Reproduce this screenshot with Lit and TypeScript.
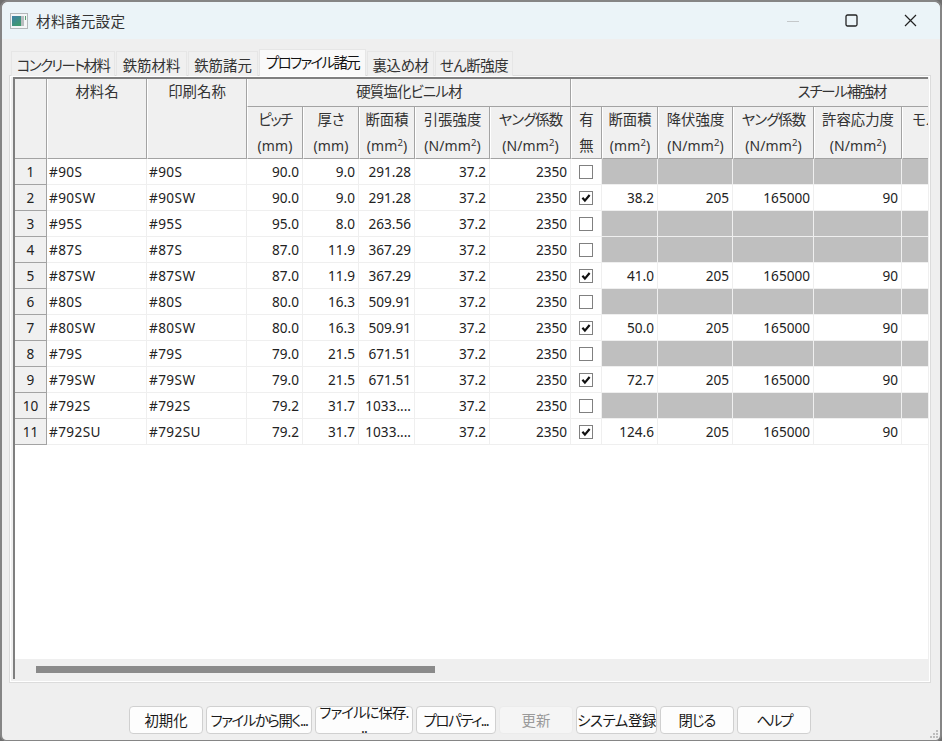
import { LitElement, html, svg, css } from "lit";
import { customElement } from "lit/decorators.js";

const sq = html`(mm<sup>2</sup>)`;
const nsq = html`(N/mm<sup>2</sup>)`;

const ROWS: [string, string, string, string, boolean, string?][] = [
  ["#90S", "90.0", "9.0", "291.28", false],
  ["#90SW", "90.0", "9.0", "291.28", true, "38.2"],
  ["#95S", "95.0", "8.0", "263.56", false],
  ["#87S", "87.0", "11.9", "367.29", false],
  ["#87SW", "87.0", "11.9", "367.29", true, "41.0"],
  ["#80S", "80.0", "16.3", "509.91", false],
  ["#80SW", "80.0", "16.3", "509.91", true, "50.0"],
  ["#79S", "79.0", "21.5", "671.51", false],
  ["#79SW", "79.0", "21.5", "671.51", true, "72.7"],
  ["#792S", "79.2", "31.7", "1033....", false],
  ["#792SU", "79.2", "31.7", "1033....", true, "124.6"],
];

@customElement("app-root")
export class AppRoot extends LitElement {
  static styles = css`
    :host {
      display: block;
      width: 942px;
      height: 741px;
      background: #6f6f6f;
      font-family: "Noto Sans", "Noto Sans CJK JP", sans-serif;
      font-size: 14.4px;
      color: #222;
      font-feature-settings: "palt";
    }
    .win {
      box-sizing: border-box;
      height: 741px;
      border: solid #858585;
      border-width: 2px 2px 1px 2px;
      border-radius: 8px 8px 6px 6px;
      background: #efefef;
      display: flex;
      flex-direction: column;
      overflow: hidden;
      position: relative;
    }
    .title {
      height: 37px;
      flex: none;
      background: #ebf4f8;
      display: flex;
      align-items: center;
      padding-left: 8px;
    }
    .title .name { margin-left: 8px; color: #333; font-size: 14.6px; letter-spacing: 0.3px; }
    .spacer { flex: 1; }
    .ctl { width: 59px; display: flex; justify-content: center; align-items: center; }
    .ctl svg { display: block; }
    .tabs {
      display: flex;
      height: 27px;
      margin: 10px 0 -1px 9px;
      align-items: flex-end;
      gap: 1px;
      position: relative;
      z-index: 1;
    }
    .tab {
      box-sizing: border-box;
      height: 25px;
      background: #f0f0f0;
      border: 1px solid #e6e6e6;
      border-bottom: none;
      display: flex;
      align-items: center;
      justify-content: center;
      white-space: nowrap;
      color: #333;
    }
    .tab.sel { height: 27px; background: #f9f9f9; color: #111; padding-bottom: 4px; }
    .k1 { letter-spacing: -1.6px; }
    .k2 { letter-spacing: -0.4px; }
    .pane {
      margin: 0 9px 0 7px;
      box-sizing: border-box;
      height: 608px;
      flex: none;
      border: 1px solid #dcdcdc;
      padding: 1px 2px 3px 3px;
      background: #efefef;
      display: flex;
      flex-direction: column;
      box-shadow: inset 0 0 0 1px #fff;
    }
    .view {
      flex: 1;
      min-height: 0;
      border: solid #7f7f7f;
      border-width: 2px 0 0 2px;
      display: flex;
      flex-direction: column;
      overflow: hidden;
      background: #fff;
    }
    .scroll { flex: 1; min-height: 0; overflow: hidden; background: #fff; }
    .grid {
      display: grid;
      grid-template-columns: 32px 100px 100px 56px 56px 56px 75px 81px 31px 56px 75px 81px 88px 74px 137px;
      grid-template-rows: 28px 52px;
      grid-auto-rows: 26px;
      width: 1100px;
    }
    .h {
      box-sizing: border-box;
      background: #f0f0f0;
      border-right: 1px solid #a3a3a3;
      border-bottom: 1px solid #a3a3a3;
      border-left: 1px solid #fff;
      text-align: center;
      line-height: 26px;
      white-space: nowrap;
      overflow: hidden;
      color: #333;
    }
    .h.r2 { grid-row: span 2; }
    .h.c5 { grid-column: span 5; letter-spacing: -0.8px; }
    .h.c7 { grid-column: span 7; letter-spacing: -1.2px; }
    .h.corner { border-left: none; }
    .h .u { font-size: 14px; letter-spacing: 0.1px; }
    .kn { letter-spacing: -1.5px; }
    .kh { letter-spacing: -0.9px; }
    sup { font-size: 9.5px; line-height: 0; vertical-align: 5px; }
    .rh {
      box-sizing: border-box;
      background: #f0f0f0;
      border-right: 1px solid #a3a3a3;
      border-bottom: 1px solid #a3a3a3;
      text-align: center;
      line-height: 25px;
      font-size: 13.6px;
    }
    .c {
      box-sizing: border-box;
      border-right: 1px solid #efefef;
      border-bottom: 1px solid #efefef;
      background: #fff;
      line-height: 25px;
      font-size: 13.6px;
      padding: 0 3px 0 2px;
      white-space: nowrap;
      overflow: hidden;
    }
    .c.t { letter-spacing: 0.4px; }
    .c.n { text-align: right; }
    .c.g { background: #bfbfbf; }
    .c.k { display: flex; align-items: center; justify-content: center; padding: 0; }
    .box {
      box-sizing: border-box;
      width: 14px;
      height: 14px;
      border: 1px solid #808080;
      background: #fff;
      display: block;
    }
    .hbar { height: 20px; flex: none; background: #efefef; display: flex; align-items: center; }
    .thumb { width: 399px; height: 7px; margin-left: 21px; background: #8a8a8a; }
    .btns {
      display: flex;
      gap: 3px;
      margin: 23px 0 0 127px;
      height: 28px;
    }
    .b {
      box-sizing: border-box;
      height: 28px;
      padding: 1px 0 0;
      background: #fdfdfd;
      border: 1px solid #d0d0d0;
      border-radius: 4px;
      font: inherit;
      font-feature-settings: "palt";
      color: #1a1a1a;
      line-height: 22px;
      overflow: hidden;
      white-space: nowrap;
      display: block;
    }
    .b.wrap { padding: 0; line-height: 15px; }
    .b.wrap span { display: block; letter-spacing: -0.9px; margin-top: -2px; }
    .b.s1 { letter-spacing: -1.4px; }
    .b.s2 { letter-spacing: -2px; }
    .b.s3 { letter-spacing: -1px; }
    .b.s4 { letter-spacing: -0.4px; }
    .b.off { background: #f5f5f5; border-color: #ebebeb; color: #9a9a9a; }
    .grip { position: absolute; right: 0; bottom: 0; display: block; }
  `;

  private check(on: boolean) {
    return html`<svg class="box" viewBox="0 0 12 12">
      ${on ? svg`<path d="M2.4 5.8 L4.9 8.6 L9.6 3" fill="none" stroke="#111" stroke-width="2.2" />` : ""}
    </svg>`;
  }

  render() {
    const tabs: [string, number, string][] = [
      ["コンクリート材料", 104, "k1"],
      ["鉄筋材料", 71, ""],
      ["鉄筋諸元", 70, ""],
      ["プロファイル諸元", 107, "sel k1"],
      ["裏込め材", 67, "k2"],
      ["せん断強度", 78, "k2"],
    ];
    const btns: [string, number, string][] = [
      ["初期化", 74, ""],
      ["ファイルから開く...", 106, "s1"],
      ["", 98, "wrap"],
      ["プロパティ...", 80, "s1"],
      ["更新", 74, "off"],
      ["システム登録", 81, "s4"],
      ["閉じる", 74, "s3"],
      ["ヘルプ", 74, "s2"],
    ];
    return html`
      <div class="win">
        <div class="title">
          <svg width="18" height="16" viewBox="0 0 18 16">
            <defs>
              <linearGradient id="ig" x1="0" y1="0" x2="0.6" y2="1">
                <stop offset="0" stop-color="#3f7fa8" />
                <stop offset="1" stop-color="#3f9a6e" />
              </linearGradient>
            </defs>
            <rect x="0.5" y="0.5" width="17" height="15" fill="#f4f6f7" stroke="#b4b8ba" />
            <rect x="2" y="3" width="9" height="10" fill="url(#ig)" />
            <rect x="11" y="3" width="3" height="10" fill="#b9bec0" />
            <rect x="15" y="3" width="1" height="4" fill="#55a070" />
          </svg>
          <span class="name">材料諸元設定</span>
          <span class="spacer"></span>
          <span class="ctl"><svg width="12" height="12"><path d="M0 6.5H12" stroke="#c4c8ca" /></svg></span>
          <span class="ctl"><svg width="13" height="13"><rect x="1" y="1" width="11" height="11" rx="1.5" fill="none" stroke="#222" stroke-width="1.3" /></svg></span>
          <span class="ctl"><svg width="13" height="13"><path d="M1 1L12 12M12 1L1 12" stroke="#222" stroke-width="1.2" /></svg></span>
        </div>
        <div class="tabs">
          ${tabs.map(([t, w, s]) => html`<div class="tab ${s}" style="width:${w}px">${t}</div>`)}
        </div>
        <div class="pane">
          <div class="view">
            <div class="scroll">
              <div class="grid">
                <div class="h r2 corner"></div>
                <div class="h r2">材料名</div>
                <div class="h r2">印刷名称</div>
                <div class="h c5">硬質塩化ビニル材</div>
                <div class="h c7">スチール補強材</div>
                <div class="h"><span class="kn">ピッチ</span><br /><span class="u">(mm)</span></div>
                <div class="h">厚さ<br /><span class="u">(mm)</span></div>
                <div class="h">断面積<br /><span class="u">${sq}</span></div>
                <div class="h">引張強度<br /><span class="u">${nsq}</span></div>
                <div class="h"><span class="kh">ヤング係数</span><br /><span class="u">${nsq}</span></div>
                <div class="h">有<br />無</div>
                <div class="h">断面積<br /><span class="u">${sq}</span></div>
                <div class="h">降伏強度<br /><span class="u">${nsq}</span></div>
                <div class="h"><span class="kh">ヤング係数</span><br /><span class="u">${nsq}</span></div>
                <div class="h">許容応力度<br /><span class="u">${nsq}</span></div>
                <div class="h">モルタル</div>
                <div class="h"></div>
                ${ROWS.map(
                  (r, i) => html`
                    <div class="rh">${i + 1}</div>
                    <div class="c t">${r[0]}</div>
                    <div class="c t">${r[0]}</div>
                    <div class="c n">${r[1]}</div>
                    <div class="c n">${r[2]}</div>
                    <div class="c n">${r[3]}</div>
                    <div class="c n">37.2</div>
                    <div class="c n">2350</div>
                    <div class="c k">${this.check(r[4])}</div>
                    ${r[4]
                      ? html`
                          <div class="c n">${r[5]}</div>
                          <div class="c n">205</div>
                          <div class="c n">165000</div>
                          <div class="c n">90</div>
                          <div class="c"></div>
                          <div class="c"></div>
                        `
                      : html`
                          <div class="c g"></div>
                          <div class="c g"></div>
                          <div class="c g"></div>
                          <div class="c g"></div>
                          <div class="c g"></div>
                          <div class="c g"></div>
                        `}
                  `
                )}
              </div>
            </div>
            <div class="hbar"><div class="thumb"></div></div>
          </div>
        </div>
        <div class="btns">
          ${btns.map(
            ([t, w, k]) => html`<button class="b ${k}" style="width:${w}px">
              ${k === "wrap" ? html`<span>ファイルに保存.<br />..</span>` : t}
            </button>`
          )}
        </div>
        <svg class="grip" width="10" height="10" viewBox="0 0 10 10" fill="#bdbdbd">
          <rect x="6" y="0" width="2" height="2" />
          <rect x="3" y="3" width="2" height="2" />
          <rect x="6" y="3" width="2" height="2" />
          <rect x="0" y="6" width="2" height="2" />
          <rect x="3" y="6" width="2" height="2" />
          <rect x="6" y="6" width="2" height="2" />
        </svg>
      </div>
    `;
  }
}
